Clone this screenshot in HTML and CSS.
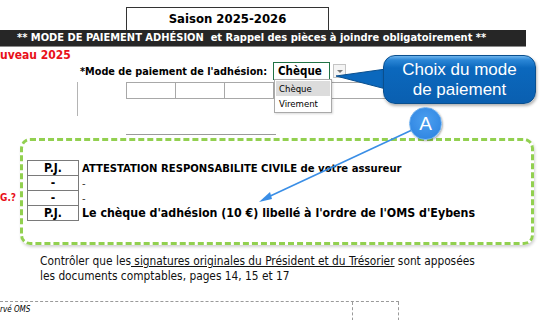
FILE: index.html
```html
<!DOCTYPE html>
<html lang="fr">

<head>
    <meta charset="UTF-8">
    <title>Mode de paiement adhésion</title>
    <link rel="stylesheet" href="styles.css">
</head>

<body>
    <div id="sheet">
        <div class="season">Saison 2025-2026</div>
        <div class="banner">** MODE DE PAIEMENT ADHÉSION &nbsp;et Rappel des pièces à joindre obligatoirement **</div>
        <div class="new-year">uveau 2025</div>

        <div class="mode-row">
            <span class="mode-label">*Mode de paiement de l'adhésion:</span>
            <span class="select-box">Chèque</span>
            <span class="select-btn"></span>
        </div>

        <div class="cells-wrap">
            <div class="cells">
                <span></span><span></span><span></span><span></span><span></span>
            </div>
        </div>
        <div class="rule"></div>

        <div class="reminder">
            <span class="side-tag">G.?</span>
            <table class="pj">
                <tr>
                    <th>P.J.</th>
                    <td class="strong">ATTESTATION RESPONSABILITE CIVILE de votre assureur</td>
                </tr>
                <tr>
                    <th>-</th>
                    <td>-</td>
                </tr>
                <tr>
                    <th>-</th>
                    <td>-</td>
                </tr>
                <tr>
                    <th>P.J.</th>
                    <td class="strong big">Le chèque d'adhésion (10 €) libellé à l'ordre de l'OMS d'Eybens</td>
                </tr>
            </table>
        </div>

        <p class="note">Contrôler que les<u> signatures originales du Président et du Trésorier</u> sont apposées<br>les documents comptables, pages 14, 15 et 17</p>

        <div class="reserved">
            <span class="reserved-text">rvé OMS</span>
            <span class="reserved-cell"></span>
        </div>

        <!-- overlays -->
        <ul class="dropdown">
            <li class="active">Chèque</li>
            <li>Virement</li>
        </ul>

        <svg class="callout-lines" width="559" height="320" viewBox="0 0 559 320">
            <polygon points="336,76 386,69 386,89" fill="#0b68bd" stroke="#0a4f8e" stroke-width="1" />
            <line x1="412" y1="130" x2="266" y2="198" stroke="#3a8ee6" stroke-width="1.6" />
            <polygon points="259,202 270,192 272,199" fill="#3a8ee6" />
        </svg>
        <div class="balloon">Choix du mode<br>de paiement</div>
        <div class="badge">A</div>
    </div>
</body>

</html>
```

FILE: styles.css
```css
* {
    box-sizing: border-box;
}

body {
    margin: 0;
    background-color: #fff;
    font-family: "DejaVu Sans Condensed", "DejaVu Sans", sans-serif;
    color: #000;
}

#sheet {
    position: relative;
    width: 559px;
    height: 320px;
    overflow: hidden;
    padding-top: 7px;
}

.season {
    margin-left: 126px;
    width: 203px;
    height: 23px;
    border: 1px solid #333;
    border-bottom: none;
    text-align: center;
    font-weight: bold;
    font-size: 13px;
    line-height: 22px;
}

.banner {
    width: 526px;
    height: 17px;
    background-color: #262626;
    border-bottom: 1px solid #8a8a8a;
    color: #fff;
    font-weight: bold;
    font-size: 11px;
    line-height: 16px;
    padding-left: 17px;
    white-space: nowrap;
}

.new-year {
    height: 15px;
    color: #e8101a;
    font-weight: bold;
    font-size: 12px;
    line-height: 16px;
}

.mode-row {
    display: flex;
    align-items: center;
    height: 18px;
    padding-left: 80px;
}

.mode-label {
    flex: none;
    width: 193px;
    white-space: nowrap;
    font-weight: bold;
    font-size: 10.8px;
}

.select-box {
    flex: none;
    width: 57px;
    height: 18px;
    border: 1px solid #217346;
    font-weight: bold;
    font-size: 11.5px;
    line-height: 16px;
    padding-left: 4px;
}

.select-btn {
    position: relative;
    flex: none;
    width: 13px;
    height: 14px;
    margin-left: 3px;
    border: 1px solid #c4c4c4;
    background-color: #f4f4f4;
}

.select-btn::after {
    content: "";
    position: absolute;
    left: 3px;
    top: 5px;
    border-left: 3px solid transparent;
    border-right: 3px solid transparent;
    border-top: 3px solid #777;
}

.cells-wrap {
    margin-left: 77px;
    margin-top: 2px;
    height: 34px;
    border-left: 1px solid #b4b4b4;
}

.cells {
    display: flex;
    margin-left: 48px;
    height: 17px;
}

.cells span {
    width: 50px;
    border: 1px solid #a8a8a8;
    margin-right: -1px;
}

.cells span:last-child {
    width: 105px;
}

.rule {
    margin-left: 126px;
    margin-top: 18px;
    width: 150px;
    border-top: 1px solid #9a9a9a;
}

.reminder {
    position: relative;
    margin-top: 3px;
    margin-left: 20px;
    width: 514px;
    height: 107px;
    border: 3px dashed #92d050;
    border-radius: 10px;
    box-shadow: 1px 2px 3px rgba(0, 0, 0, 0.18);
    padding: 19px 0 0 4px;
}

.side-tag {
    position: absolute;
    left: -23px;
    top: 51px;
    color: #e8101a;
    font-weight: bold;
    font-size: 10px;
}

.pj {
    border-collapse: collapse;
}

.pj th {
    width: 51px;
    height: 15px;
    border: 1px solid #7a7a7a;
    padding: 0;
    font-size: 12px;
    line-height: 13px;
}

.pj td {
    padding: 0 0 0 3px;
    font-size: 11px;
    color: #333;
    white-space: nowrap;
}

.pj td.strong {
    color: #000;
    font-weight: bold;
    font-size: 11.2px;
}

.pj td.big {
    font-size: 12.3px;
}

.note {
    margin: 9px 0 0 40px;
    font-size: 11.8px;
    line-height: 15px;
    color: #111;
}

.reserved {
    display: flex;
    margin-top: 17px;
    width: 399px;
    height: 30px;
    border-top: 1px dashed #9a9a9a;
}

.reserved-text {
    width: 352px;
    font-style: italic;
    font-size: 8px;
    padding-top: 3px;
}

.reserved-cell {
    width: 47px;
    border-left: 1px dashed #9a9a9a;
    border-right: 1px dashed #9a9a9a;
}

.dropdown {
    position: absolute;
    left: 274px;
    top: 79px;
    width: 58px;
    margin: 0;
    padding: 1px;
    list-style: none;
    background-color: #fff;
    border: 1px solid #a9a9a9;
    box-shadow: 1px 1px 2px rgba(0, 0, 0, 0.15);
    font-size: 9.5px;
}

.dropdown li {
    height: 15px;
    line-height: 15px;
    padding-left: 3px;
}

.dropdown li.active {
    background-color: #dcdcdc;
}

.callout-lines {
    position: absolute;
    left: 0;
    top: 0;
}

.balloon {
    position: absolute;
    left: 383px;
    top: 55px;
    width: 153px;
    height: 49px;
    border: 1px solid #0a4f8e;
    border-radius: 12px;
    background: linear-gradient(#6fb4ec 0px, #2a86d6 4px, #0b68bd 12px, #0a5fb0 100%);
    box-shadow: 1px 2px 3px rgba(0, 0, 0, 0.3);
    color: #fff;
    text-align: center;
    font-family: "Liberation Sans", Arial, sans-serif;
    font-size: 17px;
    line-height: 20px;
    padding-top: 4px;
}

.badge {
    position: absolute;
    left: 409px;
    top: 107px;
    width: 33px;
    height: 33px;
    border-radius: 50%;
    background: radial-gradient(circle at 50% 40%, #4b9ff0, #2a80de);
    border: 1px solid #6aaef0;
    box-shadow: 1px 1px 2px rgba(0, 0, 0, 0.3);
    color: #fff;
    text-align: center;
    font-family: "Liberation Sans", Arial, sans-serif;
    font-size: 19px;
    line-height: 31px;
}
```
